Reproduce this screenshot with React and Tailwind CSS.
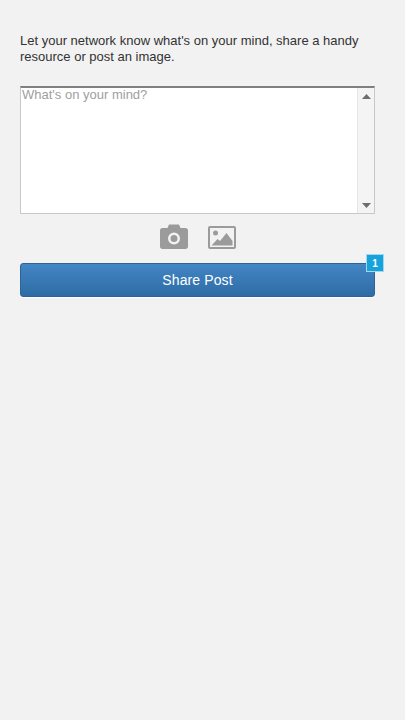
export default function App() {
  return (
    <div className="min-h-[720px] bg-[#f2f2f2] pl-5 pr-[30px] pt-[33px] font-['Liberation_Sans',Arial,sans-serif]">
      <p className="text-[13px] leading-4 text-[#333333]">
        Let your network know what's on your mind, share a handy resource or post an image.
      </p>
      <div className="mt-[21px] flex h-[128px] border border-t-2 border-[#c8c8c8] border-t-[#808080] bg-white">
        <textarea
          className="h-full min-w-0 flex-1 resize-none bg-white px-[1px] py-0 text-[13px] leading-[14px] text-[#333333] outline-none placeholder:text-[#a0a0a0]"
          placeholder="What's on your mind?"
        />
        <div className="flex w-[17px] flex-col items-center justify-between border-l border-[#e6e6e6] bg-[#f4f4f4] pb-[5px] pt-[6px]">
          <svg width="9" height="5" viewBox="0 0 9 5"><path d="M4.5 0L9 5H0z" fill="#6e6e6e" /></svg>
          <svg width="9" height="5" viewBox="0 0 9 5"><path d="M0 0H9L4.5 5z" fill="#6e6e6e" /></svg>
        </div>
      </div>
      <div className="mt-[10px] flex h-[26px] items-center justify-center gap-5">
        <svg width="28" height="25" viewBox="0 0 28 25" className="-mt-px">
          <path fillRule="evenodd" fill="#9b9b9b" d="M9 0.5H19L20.5 4H25.5C27 4 28 5 28 6.5V22.5C28 24 27 25 25.5 25H2.5C1 25 0 24 0 22.5V6.5C0 5 1 4 2.5 4H7.5ZM14 8.5A6 6 0 1 0 14 20.5A6 6 0 1 0 14 8.5ZM14 11A3.5 3.5 0 1 1 14 18A3.5 3.5 0 1 1 14 11Z" />
        </svg>
        <svg width="28" height="23" viewBox="0 0 28 23">
          <rect x="1" y="1" width="26" height="21" rx="1" fill="none" stroke="#9b9b9b" strokeWidth="2" />
          <circle cx="7.5" cy="7" r="2.5" fill="#9b9b9b" />
          <path d="M3.5 19.5L9.5 13L12 15L18.5 7L24.5 15V19.5Z" fill="#9b9b9b" />
        </svg>
      </div>
      <div className="relative mt-[13px]">
        <button className="block h-[34px] w-full rounded-[3px] border border-[#2f6397] bg-gradient-to-b from-[#4286c4] to-[#2f6ca5] text-center text-[14px] tracking-[0.1px] text-white shadow-[0_1px_0_#ffffff]">
          Share Post
        </button>
        <span className="absolute right-[-9px] top-[-9px] flex h-[18px] w-[18px] items-center justify-center border border-[#9fd8f0] bg-[#16a3dc] text-[10px] font-bold text-white">
          1
        </span>
      </div>
    </div>
  );
}
